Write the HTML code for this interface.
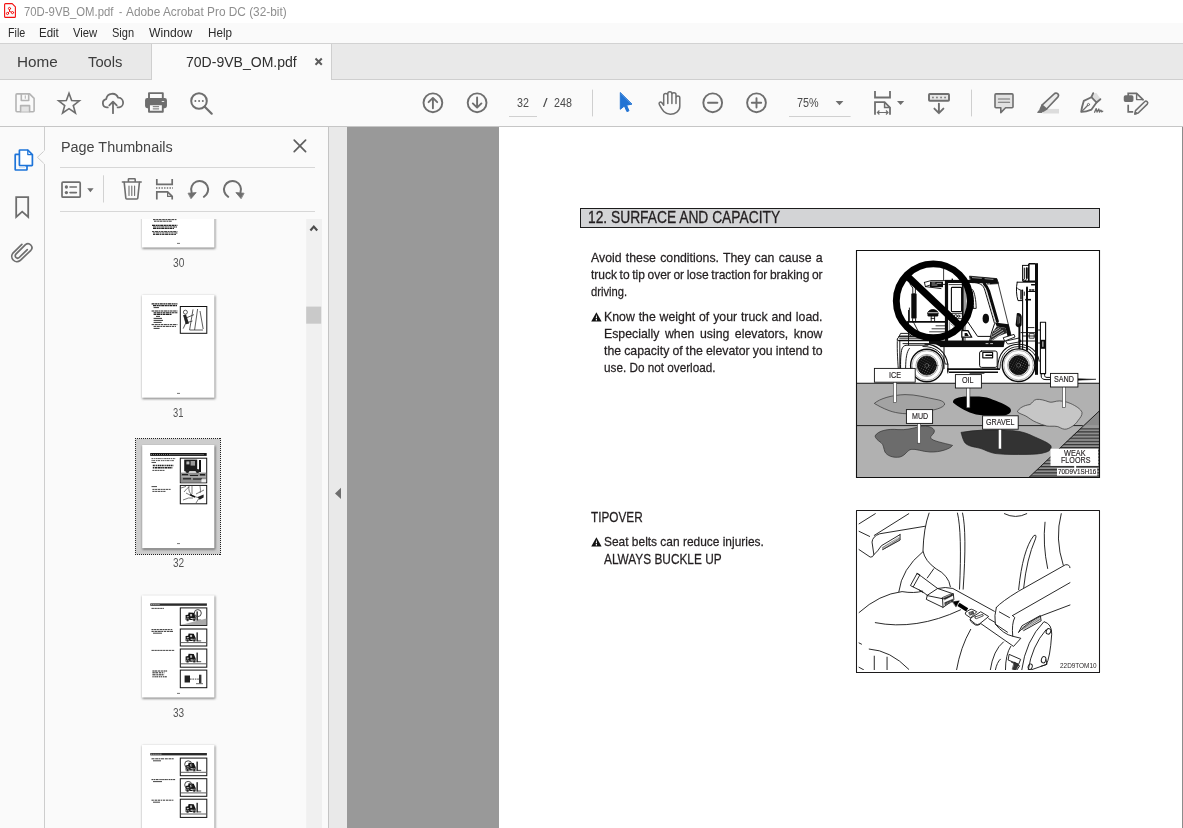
<!DOCTYPE html>
<html lang="en">
<head>
<meta charset="utf-8">
<title>70D-9VB_OM.pdf - Adobe Acrobat Pro DC (32-bit)</title>
<style>
*{box-sizing:border-box;margin:0;padding:0}
html,body{width:1183px;height:828px;overflow:hidden;background:#fff}
body{font-family:"Liberation Sans",sans-serif;color:#333;position:relative}
.abs{position:absolute}
.t{position:absolute;white-space:nowrap;line-height:1;transform-origin:0 0}
/* title bar */
#titlebar{left:0;top:0;width:1183px;height:23px;background:#fff}
#menubar{left:0;top:23px;width:1183px;height:21px;background:#fafafa;border-bottom:1px solid #d2d2d2}
#tabbar{left:0;top:44px;width:1183px;height:36px;background:#e9e9e9;border-bottom:1px solid #cfcfcf}
#tabactive{left:151px;top:44px;width:181px;height:36px;background:#fafafa;border-left:1px solid #cfcfcf;border-right:1px solid #cfcfcf}
#toolbar{left:0;top:80px;width:1183px;height:47px;background:#fafafa;border-bottom:1px solid #c6c6c6}
#leftstrip{left:0;top:127px;width:45px;height:701px;background:#fafafa;border-right:1px solid #cdcdcd}
#panel{left:45px;top:127px;width:284px;height:701px;background:#fafafa;border-right:1px solid #c4c4c4}
#sep{left:329px;top:127px;width:18px;height:701px;background:#e9e9e9}
#docbg{left:347px;top:127px;width:836px;height:701px;background:#999}
#page{left:499px;top:127px;width:684px;height:701px;background:#fff}
.ui{color:#3c3c3c}
</style>
</head>
<body>
<div id="titlebar" class="abs"></div>
<div id="menubar" class="abs"></div>
<div id="tabbar" class="abs"></div>
<div id="tabactive" class="abs"></div>
<div id="toolbar" class="abs"></div>
<div id="leftstrip" class="abs"></div>
<div id="panel" class="abs"></div>
<div id="sep" class="abs"></div>
<div id="docbg" class="abs"></div>
<div id="page" class="abs"></div>
<div class="t" style="left:23.60px;top:5.54px;font-size:12px;color:#8e8e8e;transform:scaleX(0.9447);">70D-9VB_OM.pdf</div>
<div class="t" style="left:119.20px;top:5.54px;font-size:12px;color:#8e8e8e;transform:scaleX(0.8008);">-</div>
<div class="t" style="left:125.90px;top:5.54px;font-size:12px;color:#8e8e8e;transform:scaleX(0.9874);">Adobe Acrobat Pro DC (32-bit)</div>
<div class="t" style="left:7.60px;top:26.64px;font-size:12px;color:#2b2b2b;transform:scaleX(0.8949);">File</div>
<div class="t" style="left:39.30px;top:26.64px;font-size:12px;color:#2b2b2b;transform:scaleX(0.9576);">Edit</div>
<div class="t" style="left:73.30px;top:26.64px;font-size:12px;color:#2b2b2b;transform:scaleX(0.9410);">View</div>
<div class="t" style="left:112.30px;top:26.64px;font-size:12px;color:#2b2b2b;transform:scaleX(0.9204);">Sign</div>
<div class="t" style="left:149.40px;top:26.64px;font-size:12px;color:#2b2b2b;transform:scaleX(1.0139);">Window</div>
<div class="t" style="left:207.50px;top:26.64px;font-size:12px;color:#2b2b2b;transform:scaleX(0.9723);">Help</div>
<div class="t" style="left:16.70px;top:54.13px;font-size:15.2px;color:#3c3c3c;transform:scaleX(1.0061);">Home</div>
<div class="t" style="left:88.20px;top:54.13px;font-size:15.2px;color:#3c3c3c;transform:scaleX(0.9725);">Tools</div>
<div class="t" style="left:185.90px;top:54.13px;font-size:15.2px;color:#2f2f2f;transform:scaleX(0.9241);">70D-9VB_OM.pdf</div>
<div class="t" style="left:517.00px;top:96.72px;font-size:12.5px;color:#4a4a4a;transform:scaleX(0.8561);">32</div>
<div class="t" style="left:543.20px;top:96.72px;font-size:12.5px;color:#4a4a4a;transform:scaleX(1.3237);">/</div>
<div class="t" style="left:554.20px;top:96.72px;font-size:12.5px;color:#4a4a4a;transform:scaleX(0.8585);">248</div>
<div class="t" style="left:797.30px;top:96.72px;font-size:12.5px;color:#4a4a4a;transform:scaleX(0.8636);">75%</div>
<div class="t" style="left:61.20px;top:138.93px;font-size:15.2px;color:#444;transform:scaleX(0.9474);">Page Thumbnails</div>
<div class="t" style="left:172.50px;top:257.37px;font-size:12.2px;color:#555;transform:scaleX(0.8403);">30</div>
<div class="t" style="left:172.80px;top:407.37px;font-size:12.2px;color:#555;transform:scaleX(0.7666);">31</div>
<div class="t" style="left:172.60px;top:556.87px;font-size:12.2px;color:#555;transform:scaleX(0.8256);">32</div>
<div class="t" style="left:172.60px;top:707.17px;font-size:12.2px;color:#555;transform:scaleX(0.8256);">33</div>
<svg class="abs" style="left:0;top:0" width="1183" height="828" viewBox="0 0 1183 828" fill="none" stroke-linecap="round" stroke-linejoin="round">
<g stroke="#f40f0f" stroke-width="1.1" fill="#fafcfc"><path d="M5.6,3.6 H12.2 L15.4,6.8 V16.4 a1,1 0 0 1 -1,1 H5.6 a1,1 0 0 1 -1,-1 V4.6 a1,1 0 0 1 1,-1 Z"/><g fill="#fff" stroke-width="1"><path d="M9.5,8.6 V11.4 L7.6,13.4 M9.5,11.4 L12.4,12.6" /><circle cx="9.5" cy="8.5" r="1.1"/><circle cx="7.5" cy="13.5" r="1.1"/><circle cx="12.5" cy="12.6" r="1.1"/></g></g>
<path d="M315.5,58.5 l6.3,6.3 m0,-6.3 l-6.3,6.3" stroke="#5c5c5c" stroke-width="2" stroke-linecap="butt"/>
<g stroke="#b4b4b4" stroke-width="1.6"><path d="M17,93.9 H29.6 L34.1,98.4 V110.8 a1,1 0 0 1 -1,1 H17 a1,1 0 0 1 -1,-1 V94.9 a1,1 0 0 1 1,-1 Z"/><path d="M21.3,94 V100.5 H28.7 V94"/><path d="M25.3,95.8 V98.2" stroke-width="1.1"/><path d="M20.6,111.6 V105.6 H29.6 V111.6" fill="#e4e4e4"/></g>
<polygon points="69.00,93.30 71.65,100.56 79.37,100.83 73.28,105.59 75.41,113.02 69.00,108.70 62.59,113.02 64.72,105.59 58.63,100.83 66.35,100.56" stroke="#6e6e6e" stroke-width="1.6" stroke-linejoin="miter"/>
<g stroke="#6e6e6e" stroke-width="1.8"><path d="M107.8,107.4 H106.8 a4.2,4.2 0 0 1 -0.6,-8.3 a6.2,6.2 0 0 1 11.9,-1.4 a4.9,4.9 0 0 1 1.1,9.7 H117.6"/><path d="M113,113.2 V102 M109.3,105.3 L113,101.6 L116.7,105.3"/></g>
<g stroke="#6e6e6e" stroke-width="1.9"><rect x="149" y="93.1" width="13.8" height="6"/><rect x="146" y="99" width="20" height="8.3" rx="1.2" fill="#6e6e6e"/><rect x="149" y="104.4" width="13.8" height="7.4" fill="#fafafa"/><path d="M153.2,106.7 H158.7 M153.2,108.9 H158.7" stroke-width="1"/><path d="M162.2,101.5 H163.8" stroke="#e8e8e8" stroke-width="1.1"/></g>
<g stroke="#6e6e6e" stroke-width="2"><circle cx="199" cy="101" r="7.8"/><path d="M204.7,106.7 L211.7,113.7" stroke-width="2.2"/></g><g fill="#6e6e6e"><circle cx="195.4" cy="101" r="1"/><circle cx="199.1" cy="101" r="1"/><circle cx="202.8" cy="101" r="1"/></g>
<g stroke="#6e6e6e" stroke-width="1.9"><circle cx="432.9" cy="102.8" r="9.4"/><path d="M432.9,108.2 V98 M428.6,102.2 L432.9,97.9 L437.2,102.2"/><circle cx="477.1" cy="102.8" r="9.4"/><path d="M477.1,97.4 V107.6 M472.8,103.4 L477.1,107.7 L481.4,103.4"/></g>
<path d="M509,116.5 H537 M789,116.5 H850.6" stroke="#d0d0d0" stroke-width="1" stroke-linecap="butt"/>
<path d="M592.5,89.6 V116.4 M971.5,89.6 V116.4" stroke="#cfcfcf" stroke-width="1" stroke-linecap="butt"/>
<path d="M620.3,92.9 V109.3 L624.4,106 L626.9,111.6 L629,110.8 L626.6,105.2 L631.6,104.2 Z" fill="#2173d4" stroke="#2173d4" stroke-width="1"/>
<path d="M663.7,105.2 V95.6 a2.05,2.05 0 0 1 4.1,0 V103.4 M667.8,95.6 V93.9 a2.05,2.05 0 0 1 4.1,0 V103.4 M671.9,94.8 a2.05,2.05 0 0 1 4.1,0 V103.4 M676,98 a1.9,1.9 0 0 1 3.8,0 V106.2 C679.8,111.2 675.2,114.2 670.3,114.2 C664.6,114.2 662.3,110.2 659.4,104.6 C658.3,102.4 660.3,101.2 662,102.9 L663.7,105.2" stroke="#6e6e6e" stroke-width="1.5"/>
<g stroke="#6e6e6e" stroke-width="1.9"><circle cx="712.7" cy="102.8" r="9.4"/><path d="M708,102.8 H717.4"/><circle cx="756.5" cy="102.8" r="9.4"/><path d="M751.8,102.8 H761.2 M756.5,98.1 V107.5"/></g>
<g fill="#6e6e6e" stroke="none"><path d="M835.6,100.9 H843.4 L839.5,105.2 Z"/><path d="M897,100.9 H904.2 L900.6,105.1 Z"/><path d="M87.2,188.3 H93.6 L90.4,192.2 Z"/></g>
<g stroke="#6e6e6e" stroke-width="1.8" stroke-linecap="butt" stroke-linejoin="miter"><path d="M875,91 V97.5 H890 V91"/><path d="M875,114.8 V102.2 H884.6 L890,107.6 V114.8"/><path d="M884.6,102.2 V107.6 H890" stroke-width="1.5"/><path d="M877.4,112.5 H888 M879.4,110.5 L877.4,112.5 L879.4,114.5 M886,110.5 L888,112.5 L886,114.5" stroke-width="1.2"/></g>
<g stroke="#6e6e6e" stroke-width="1.9"><rect x="929" y="94" width="20" height="6.8" rx="0.8" fill="#e6e6e6"/><path d="M938.9,103.6 V113 M934.4,108.6 L938.9,113.2 L943.4,108.6"/></g><g fill="#6e6e6e"><rect x="932.2" y="96.7" width="1.5" height="1.6"/><rect x="936.2" y="96.7" width="1.5" height="1.6"/><rect x="940.3" y="96.7" width="1.5" height="1.6"/><rect x="944.3" y="96.7" width="1.5" height="1.6"/></g>
<g stroke="#6e6e6e" stroke-width="1.6"><path d="M996,93.9 H1012 a1,1 0 0 1 1,1 V106.7 a1,1 0 0 1 -1,1 H1005.6 L1000.8,112.6 V107.7 H996 a1,1 0 0 1 -1,-1 V94.9 a1,1 0 0 1 1,-1 Z" fill="#e2e2e2"/><path d="M998.4,99 H1009.6 M998.4,102.3 H1009.6" stroke-width="1.1"/></g>
<rect x="1042.6" y="108.9" width="16.4" height="4.6" fill="#dcdcdc"/><g stroke="#6e6e6e" stroke-width="1.6"><path d="M1054.2,93.9 a2.4,2.4 0 0 1 3.6,3.2 L1046.6,109 L1042,105.2 Z" fill="#ececec"/><path d="M1042,105.2 L1040.4,108.8 L1043.4,111 L1046.6,109" fill="#6e6e6e"/><path d="M1040.4,109 L1037.6,112.4 H1042 L1043.2,111 Z" fill="#6e6e6e" stroke-width="1"/></g>
<path d="M1093,93.2 L1096.4,93 L1100.6,98.8 L1096.6,102.4 L1091.6,97.2 Z" fill="#dedede"/><g stroke="#6e6e6e" stroke-width="1.8"><path d="M1093.2,93.1 L1091.4,97.2 L1096.5,102.5 L1100.4,99.2"/><path d="M1091.4,97.2 L1083.8,100.9 C1082.6,104.6 1081.6,108.4 1081.2,111.9 C1085,112 1088.6,110.8 1091.5,109.6 L1096.5,102.5"/><path d="M1081.6,111.6 L1087.8,105.2" stroke-width="1.3"/><circle cx="1088.5" cy="104.5" r="1.1" stroke-width="1"/><path d="M1094.6,112.2 l1.6,-3.6 l0.9,3.4 l1.7,-3 l0.7,3 l1.4,-1.8 l0.9,1.6 l0.9,-0.6" stroke-width="1.35"/></g>
<g stroke="#6e6e6e" stroke-width="1.7"><path d="M1128.2,96 V93.4 H1136.6 L1143,99.6 V100.4 M1128.2,104.8 V111.8 H1133.2" stroke-linecap="butt" stroke-linejoin="miter"/><path d="M1136.6,93.6 V99.6 H1142.8" stroke-width="1.4"/><rect x="1124.6" y="96.2" width="8" height="5" rx="0.9" fill="#6e6e6e"/><path d="M1144.6,101.8 a1.75,1.75 0 0 1 2.7,2.3 L1138.2,113 L1134.8,114 L1135.5,110.6 Z" fill="#f4f4f4" stroke-width="1.5"/><path d="M1134.8,114 L1135.4,111.6 L1137.2,113.2 Z" fill="#6e6e6e" stroke-width="0.8"/></g>
<g stroke="#1d74d9" stroke-width="1.7" stroke-linejoin="round"><path d="M19.6,154.4 H15.8 a0.6,0.6 0 0 0 -0.6,0.6 V169.4 a0.6,0.6 0 0 0 0.6,0.6 H26.4 a0.6,0.6 0 0 0 0.6,-0.6 V166" /><path d="M20,150 H27.8 L32.4,154.6 V165 a0.6,0.6 0 0 1 -0.6,0.6 H20 a0.6,0.6 0 0 1 -0.6,-0.6 V150.6 a0.6,0.6 0 0 1 0.6,-0.6 Z" fill="#fff"/><path d="M27.8,150.2 V154.6 H32.2" stroke-width="1.3"/></g><rect x="19" y="166.3" width="6" height="1.6" fill="#cfe0f5"/>
<path d="M16.2,197.2 H28.2 V217 L22.2,211.6 L16.2,217 Z" stroke="#6e6e6e" stroke-width="1.8" stroke-linejoin="miter"/>
<path d="M27.2,249.4 L19.4,257.6 a2.3,2.3 0 0 1 -3.4,-3.2 L25.2,244.6 a3.9,3.9 0 0 1 5.6,5.4 L20.4,260.6 a5.2,5.2 0 0 1 -7.4,-7.2 L21.6,244.4" stroke="#6e6e6e" stroke-width="1.7" transform="rotate(2 22 252)"/>
<path d="M44.5,150.6 L37.4,157.3 L44.5,164" fill="#fafafa" stroke="#cdcdcd" stroke-width="1"/><path d="M44.5,151.4 V163.2" stroke="#fafafa" stroke-width="1.6"/>
<path d="M294.2,140.2 L305.6,151.6 M305.6,140.2 L294.2,151.6" stroke="#5e5e5e" stroke-width="1.7"/>
<path d="M60,167.5 H315 M60,211.5 H315" stroke="#d7d7d7" stroke-width="1" stroke-linecap="butt"/><path d="M103.5,175.3 V202.5" stroke="#d2d2d2" stroke-width="1" stroke-linecap="butt"/>
<g stroke="#6e6e6e" stroke-width="1.7"><rect x="62" y="182.2" width="18.2" height="15" rx="1"/><path d="M70,187 H76.4 M70,192.6 H76.4" stroke-width="1.6"/></g><g fill="#6e6e6e"><circle cx="66.4" cy="187" r="1.65"/><circle cx="66.4" cy="192.6" r="1.65"/></g>
<g stroke="#6e6e6e" stroke-width="1.6"><path d="M122.4,182 H141.2 M128.4,181.8 V179.4 a0.6,0.6 0 0 1 0.6,-0.6 H134.6 a0.6,0.6 0 0 1 0.6,0.6 V181.8"/><path d="M124.2,182.4 L125.8,198 a1,1 0 0 0 1,1 H136.8 a1,1 0 0 0 1,-1 L139.4,182.4"/><path d="M129,186 V195.4 M131.8,186 V195.4 M134.6,186 V195.4" stroke-width="1.1"/></g>
<g stroke="#6e6e6e" stroke-width="1.7" stroke-linecap="butt" stroke-linejoin="miter"><path d="M156.8,179 V184.4 H172.2 V179"/><path d="M156.8,199.6 V191.8 H167.6 L172.2,196.4 V199.6"/><path d="M167.6,192 V196.4 H172" stroke-width="1.2"/><path d="M156,188 H173" stroke-width="1.4" stroke-dasharray="1.4 1.3"/></g>
<g stroke="#6e6e6e" stroke-width="2"><path d="M191.6,192.3 A8.5,8.5 0 1 1 203.85,196.8"/><path d="M240.5,192.3 A8.5,8.5 0 1 0 228.25,196.8"/></g><g fill="#6e6e6e" stroke="#6e6e6e" stroke-width="0.8"><path d="M188.4,193.2 L196.2,192.6 L191.2,198.4 Z"/><path d="M243.7,193.2 L235.9,192.6 L240.9,198.4 Z"/></g>
<rect x="306.2" y="219" width="15.8" height="609" fill="#f0f0f0"/><rect x="306.2" y="306.6" width="15" height="17.1" fill="#c9c9c9"/><path d="M310.4,230.4 L313.8,226.6 L317.2,230.4" stroke="#4c4c4c" stroke-width="2.2" stroke-linecap="butt" stroke-linejoin="miter"/>
<path d="M341,487.8 V499 L335,493.4 Z" fill="#6e6e6e"/>
</svg>
<svg class="abs" style="left:45px;top:219px" width="261" height="609" viewBox="45 219 261 609">
<defs><filter id="sh" x="-10%" y="-10%" width="120%" height="120%"><feGaussianBlur stdDeviation="0.9"/></filter></defs>
<rect x="142.3" y="210.8" width="73.0" height="38.1" fill="#8a8a8a" filter="url(#sh)"/><rect x="142" y="210" width="72.4" height="37.5" fill="#fff"/>
<g stroke="#222" stroke-width="0.9"><path d="M153,219.6 H177 M154,221.2 H172" stroke-dasharray="2.6 0.6 1.8 0.5 3 0.7"/><path d="M152,225.4 H177.4 M153,227 H177 M153,228.5 H174" stroke-width="1.1" stroke-dasharray="3 0.5 2.2 0.4 1.6 0.5"/><path d="M152,231.6 H177.4 M153,233 H177.4 M153,234.5 H176" stroke-dasharray="2.4 0.6 3.2 0.5 1.8 0.6"/></g>
<path d="M177,243.4 H180" stroke="#555" stroke-width="0.8"/>
<rect x="142.3" y="295.8" width="73.0" height="103.29999999999998" fill="#8a8a8a" filter="url(#sh)"/><rect x="142" y="295" width="72.4" height="102.69999999999999" fill="#fff"/>
<g stroke="#222" stroke-width="0.9"><path d="M151.6,303.9 H177.4 M153,305.6 H177" stroke-width="1.1" stroke-dasharray="3 0.5 2.2 0.4 1.6 0.5"/><path d="M153.6,307.6 H159"/><path d="M151.6,311 H177.4 M153.6,312.8 H177.4 M153.6,314.4 H172" stroke-width="1.1" stroke-dasharray="2.6 0.5 3.4 0.4 1.8 0.5"/><path d="M156,316.4 H160 M153.6,318.4 H162 M153.6,320.4 H163 M153.6,322.4 H161.6"/><path d="M151.6,324.6 H177.4 M153.6,326.4 H176" stroke-dasharray="2.4 0.6 3.2 0.5 1.8 0.6"/><path d="M153.6,328.4 H159.6"/></g>
<rect x="180.3" y="306.5" width="26.5" height="26.8" fill="#fff" stroke="#111" stroke-width="1"/>
<g stroke="#333" stroke-width="0.8" fill="none"><circle cx="185.4" cy="312.2" r="2"/><path d="M183.6,315 L185.8,323 L192.4,321 M185.8,323 L183.2,328.6 M186,318 L194,314.6 M193,309.4 L189.6,330 M197.6,309 L194.6,330 M189.6,330 H203 M200,311 L203.2,329"/></g><path d="M183.4,315.2 L186,324.2 L189,323.4 L186,314.4 Z" fill="#222"/>
<path d="M177,393.4 H180" stroke="#555" stroke-width="0.8"/>
<rect x="135.5" y="438.5" width="85" height="116" fill="#cdcdcd"/><path d="M135,438.5 H221 M135,554.5 H221 M135.5,438 V555 M220.5,438 V555" fill="none" stroke="#222" stroke-width="1" stroke-dasharray="1 1"/>

<rect x="142.4" y="446" width="73" height="103.6" fill="#666" filter="url(#sh)"/><rect x="142.2" y="445" width="72.2" height="103.2" fill="#fff"/>
<rect x="150.2" y="453" width="56.5" height="2.9" fill="#151515"/><path d="M151,454.5 H170" stroke="#ccc" stroke-width="0.7" stroke-dasharray="0.8 1.2"/><path d="M170,454.5 H204" stroke="#999" stroke-width="0.5"/>
<path d="M151.5,458.6 H175.3" stroke="#444" stroke-width="0.9" stroke-dasharray="1.5 0.6 1.3 0.6 1.9 0.3 2.2 0.3"/><path d="M151.5,460.6 H174.6" stroke="#444" stroke-width="0.9" stroke-dasharray="1.3 0.3 2.0 0.7 1.4 0.4 2.5 0.8"/>
<path d="M151.5,462.5 H156" stroke="#444" stroke-width="0.9"/>
<path d="M152.8,465.5 H173.7" stroke="#222" stroke-width="1.4" stroke-dasharray="2.0 0.8 1.3 0.7 1.8 0.4 1.4 0.5"/><path d="M152.8,467.8 H172.3" stroke="#222" stroke-width="1.4" stroke-dasharray="1.6 0.6 2.5 0.5 2.3 0.3 1.3 0.4"/>
<path d="M152.4,470.4 H165" stroke="#333" stroke-width="0.9" stroke-dasharray="2 0.5"/>
<path d="M151.5,486.6 H157" stroke="#333" stroke-width="0.9"/><path d="M152.4,489.4 H170.6 M152.4,491.4 H166" stroke="#333" stroke-width="0.9" stroke-dasharray="2.2 0.5"/>
<rect x="180.3" y="458.2" width="26.4" height="24.6" fill="#fff" stroke="#111" stroke-width="1"/>
<rect x="180.8" y="472.6" width="25.4" height="9.8" fill="#8f8f8f"/>
<rect x="184.2" y="459.6" width="13" height="11.6" fill="#1c1c1c"/><rect x="186.4" y="461.4" width="3" height="3" fill="#bbb"/><rect x="190.6" y="461" width="4.4" height="4.6" fill="#999"/><rect x="199" y="460" width="2" height="12" fill="#111"/><circle cx="187.4" cy="471" r="2" fill="#222"/><circle cx="197.6" cy="471" r="2" fill="#222"/>
<path d="M182,474.6 h6 M190,475.6 h8 M200,474.8 h5" stroke="#222" stroke-width="1.4"/><path d="M183,478.6 h8 M193,479 h9" stroke="#333" stroke-width="1.6"/><path d="M181.4,476.8 h24.6" stroke="#ccc" stroke-width="0.8"/><rect x="201.4" y="479.2" width="4.6" height="3" fill="#eee"/>
<rect x="180.3" y="485.4" width="26.4" height="18.4" fill="#fff" stroke="#111" stroke-width="1"/>
<g stroke="#444" stroke-width="0.7" fill="none"><path d="M181,488 l5,-1.6 M184,492 q3,-4 5,-5 M189,486 q-1,6 3,9 M192,486 v8 M186,493 l6,3 l8,2 M196,494 l8,-4 M200,486 q1,5 0,7 M183,500 q6,-3 10,-2 M196,503 q2,-5 6,-6"/></g><path d="M190,494.6 l5,2.4" stroke="#111" stroke-width="1.6"/><path d="M197.6,497 l6,-2.6 v3 l-4,2.4 Z" fill="#222"/>
<path d="M177,543.6 H180" stroke="#555" stroke-width="0.8"/>
<rect x="142.3" y="596.0999999999999" width="73.0" height="102.80000000000004" fill="#8a8a8a" filter="url(#sh)"/><rect x="142" y="595.3" width="72.4" height="102.20000000000005" fill="#fff"/>
<rect x="150.3" y="603.4" width="56.6" height="2.4" fill="#2b2b2b"/><path d="M151,604.6 H160" stroke="#ddd" stroke-width="0.7" stroke-dasharray="1.5 0.6"/>
<rect x="180.3" y="607.9" width="26.5" height="17.5" fill="#fff" stroke="#111" stroke-width="1"/><path d="M185.6,615.1 L188.1,614.8 L188.6,612.4 L193.7,612.8 L195.7,617.1 V620.1 H185.6 Z" fill="#151515"/><rect x="190.1" y="614.0" width="2.0" height="2.3" fill="#bbb"/><rect x="186.8" y="616.3" width="2.0" height="0.9" fill="#ddd"/><rect x="190.6" y="618.0" width="2.2" height="0.9" fill="#eee"/><rect x="196.5" y="611.4" width="1.3" height="9.1" fill="#111"/><path d="M196.7,620.1 h4.5" stroke="#222" stroke-width="0.8"/><circle cx="187.6" cy="619.8" r="1.5" fill="#222" stroke="#ddd" stroke-width="0.5"/><circle cx="194.2" cy="619.8" r="1.5" fill="#222" stroke="#ddd" stroke-width="0.5"/><circle cx="197.8" cy="613.1" r="3.5" fill="none" stroke="#444" stroke-width="1"/>
<path d="M180.8,624.9 L206.3,624.9 L206.3,618.4 Z" fill="#a9a9a9"/>
<rect x="180.3" y="629" width="26.5" height="17" fill="#fff" stroke="#111" stroke-width="1"/><path d="M185.6,636.0 L188.1,635.7 L188.6,633.4 L193.7,633.8 L195.7,637.9 V640.9 H185.6 Z" fill="#151515"/><rect x="190.1" y="634.9" width="2.0" height="2.2" fill="#bbb"/><rect x="186.8" y="637.2" width="2.0" height="0.9" fill="#ddd"/><rect x="190.6" y="638.8" width="2.2" height="0.9" fill="#eee"/><rect x="196.5" y="632.4" width="1.3" height="8.8" fill="#111"/><path d="M196.7,640.9 h4.5" stroke="#222" stroke-width="0.8"/><circle cx="187.6" cy="640.5" r="1.4" fill="#222" stroke="#ddd" stroke-width="0.5"/><circle cx="194.2" cy="640.5" r="1.4" fill="#222" stroke="#ddd" stroke-width="0.5"/>
<path d="M181,642.6 H206" stroke="#333" stroke-width="0.8"/>
<rect x="180.3" y="649" width="26.5" height="18.200000000000045" fill="#fff" stroke="#111" stroke-width="1"/><path d="M185.6,656.5 L188.1,656.1 L188.6,653.7 L193.7,654.1 L195.7,658.5 V661.7 H185.6 Z" fill="#151515"/><rect x="190.1" y="655.3" width="2.0" height="2.4" fill="#bbb"/><rect x="186.8" y="657.7" width="2.0" height="1.0" fill="#ddd"/><rect x="190.6" y="659.5" width="2.2" height="1.0" fill="#eee"/><rect x="196.5" y="652.6" width="1.3" height="9.5" fill="#111"/><path d="M196.7,661.7 h4.5" stroke="#222" stroke-width="0.8"/><circle cx="187.6" cy="661.3" r="1.5" fill="#222" stroke="#ddd" stroke-width="0.5"/><circle cx="194.2" cy="661.3" r="1.5" fill="#222" stroke="#ddd" stroke-width="0.5"/>
<path d="M181,663.8000000000001 H206" stroke="#333" stroke-width="0.8"/>
<rect x="180.3" y="670.1" width="26.5" height="17.600000000000023" fill="#fff" stroke="#111" stroke-width="1"/><rect x="184.6" y="675.5" width="5.4" height="7" fill="#222"/><path d="M190,679.1 h9" stroke="#333" stroke-width="0.9" stroke-dasharray="1.6 0.8"/><rect x="199" y="674.7" width="2.4" height="8.6" fill="#333"/><path d="M196,683.7 h7" stroke="#444" stroke-width="0.8"/>
<path d="M151.5,608.4 H164" stroke="#333" stroke-width="0.9" stroke-dasharray="2.4 0.5"/>
<path d="M151.5,629.6 H172.3" stroke="#222" stroke-width="0.9" stroke-dasharray="2.1 0.5 2.4 0.5 1.8 0.7 2.6 0.4"/><path d="M151.5,631.4 H173.0" stroke="#222" stroke-width="0.9" stroke-dasharray="2.3 0.7 2.7 0.4 3.2 0.4 2.0 0.7"/>
<path d="M153,633.2 H162" stroke="#333" stroke-width="0.9"/>
<path d="M151.5,650.4 H174.6" stroke="#333" stroke-width="0.9" stroke-dasharray="2.4 0.5"/>
<path d="M152.4,671 H167.1" stroke="#222" stroke-width="1.0" stroke-dasharray="2.2 0.3 2.5 0.7 2.3 0.7 1.8 0.6"/><path d="M152.4,672.8 H164.4" stroke="#222" stroke-width="1.0" stroke-dasharray="2.4 0.5 2.9 0.8 2.1 0.6 1.3 0.7"/><path d="M152.4,674.8 H164.1" stroke="#222" stroke-width="1.0" stroke-dasharray="3.2 0.7 1.8 0.5 2.5 0.3 2.1 0.4"/><path d="M152.4,676.8 H167.3" stroke="#222" stroke-width="1.0" stroke-dasharray="1.3 0.7 1.5 0.4 2.0 0.7 1.4 0.5"/>
<path d="M177,693.4 H180" stroke="#555" stroke-width="0.8"/>
<rect x="142.3" y="745.8" width="73.0" height="85.6" fill="#8a8a8a" filter="url(#sh)"/><rect x="142" y="745" width="72.4" height="85" fill="#fff"/>
<rect x="150.3" y="753" width="56.6" height="2.4" fill="#2b2b2b"/><path d="M151,754.2 H162" stroke="#ddd" stroke-width="0.7" stroke-dasharray="1.5 0.6"/>
<rect x="180.3" y="758.1" width="26.5" height="17.600000000000023" fill="#fff" stroke="#111" stroke-width="1"/><path d="M185.6,765.4 L188.1,765.0 L188.6,762.7 L193.7,763.1 L195.7,767.3 V770.4 H185.6 Z" fill="#151515"/><rect x="190.1" y="764.2" width="2.0" height="2.3" fill="#bbb"/><rect x="186.8" y="766.5" width="2.0" height="0.9" fill="#ddd"/><rect x="190.6" y="768.3" width="2.2" height="0.9" fill="#eee"/><rect x="196.5" y="761.6" width="1.3" height="9.2" fill="#111"/><path d="M196.7,770.4 h4.5" stroke="#222" stroke-width="0.8"/><circle cx="187.6" cy="770.0" r="1.5" fill="#222" stroke="#ddd" stroke-width="0.5"/><circle cx="194.2" cy="770.0" r="1.5" fill="#222" stroke="#ddd" stroke-width="0.5"/><circle cx="188.2" cy="764.3" r="3.5" fill="none" stroke="#444" stroke-width="1"/>
<path d="M181,772.3000000000001 H206" stroke="#333" stroke-width="0.8"/>
<rect x="180.3" y="778.7" width="26.5" height="17.59999999999991" fill="#fff" stroke="#111" stroke-width="1"/><path d="M185.6,786.0 L188.1,785.6 L188.6,783.3 L193.7,783.7 L195.7,787.9 V791.0 H185.6 Z" fill="#151515"/><rect x="190.1" y="784.8" width="2.0" height="2.3" fill="#bbb"/><rect x="186.8" y="787.1" width="2.0" height="0.9" fill="#ddd"/><rect x="190.6" y="788.9" width="2.2" height="0.9" fill="#eee"/><rect x="196.5" y="782.2" width="1.3" height="9.2" fill="#111"/><path d="M196.7,791.0 h4.5" stroke="#222" stroke-width="0.8"/><circle cx="187.6" cy="790.6" r="1.5" fill="#222" stroke="#ddd" stroke-width="0.5"/><circle cx="194.2" cy="790.6" r="1.5" fill="#222" stroke="#ddd" stroke-width="0.5"/><circle cx="188.2" cy="784.9" r="3.5" fill="none" stroke="#444" stroke-width="1"/>
<path d="M181,792.9 H206" stroke="#333" stroke-width="0.8"/>
<rect x="180.3" y="799.2" width="26.5" height="18.199999999999932" fill="#fff" stroke="#111" stroke-width="1"/><path d="M185.6,806.7 L188.1,806.3 L188.6,803.9 L193.7,804.3 L195.7,808.7 V811.9 H185.6 Z" fill="#151515"/><rect x="190.1" y="805.5" width="2.0" height="2.4" fill="#bbb"/><rect x="186.8" y="807.9" width="2.0" height="1.0" fill="#ddd"/><rect x="190.6" y="809.7" width="2.2" height="1.0" fill="#eee"/><rect x="196.5" y="802.8" width="1.3" height="9.5" fill="#111"/><path d="M196.7,811.9 h4.5" stroke="#222" stroke-width="0.8"/><circle cx="187.6" cy="811.5" r="1.5" fill="#222" stroke="#ddd" stroke-width="0.5"/><circle cx="194.2" cy="811.5" r="1.5" fill="#222" stroke="#ddd" stroke-width="0.5"/>
<path d="M181,814.0 H206" stroke="#333" stroke-width="0.8"/>
<path d="M151.5,758.8 H173.7" stroke="#222" stroke-width="0.9" stroke-dasharray="3.0 0.7 2.9 0.4 2.0 0.5 3.0 0.8"/>
<path d="M153,760.8 H161" stroke="#333" stroke-width="0.9"/>
<path d="M151.5,779.6 H175.1" stroke="#222" stroke-width="0.9" stroke-dasharray="1.6 0.4 1.7 0.5 2.4 0.4 1.2 0.5"/>
<path d="M153,781.6 H162" stroke="#333" stroke-width="0.9"/>
<path d="M151.5,800.2 H173.8" stroke="#222" stroke-width="0.9" stroke-dasharray="2.3 0.8 2.6 0.6 2.4 0.6 1.3 0.7"/>
<path d="M153,802.2 H160" stroke="#333" stroke-width="0.9"/>
</svg>
<div class="abs" style="left:1182px;top:127px;width:1px;height:701px;background:#8c8c8c"></div>
<div class="abs" style="left:580px;top:208px;width:520px;height:20px;background:#d3d4d6;border:1px solid #1c1c1c"></div>
<div class="t" style="left:587.50px;top:209.43px;font-size:16.5px;color:#231f20;transform:scaleX(0.8358);-webkit-text-stroke:0.32px #231f20;">12. SURFACE AND CAPACITY</div>
<div class="t" style="left:591.00px;top:250.59px;font-size:13.6px;color:#231f20;transform:scaleX(0.9050);word-spacing:0.918px;-webkit-text-stroke:0.26px #231f20;">Avoid these conditions. They can cause a</div>
<div class="t" style="left:591.00px;top:268.09px;font-size:13.6px;color:#231f20;transform:scaleX(0.8850);word-spacing:-0.894px;-webkit-text-stroke:0.26px #231f20;">truck to tip over or lose traction for braking or</div>
<div class="t" style="left:591.00px;top:285.29px;font-size:13.6px;color:#231f20;transform:scaleX(0.8233);-webkit-text-stroke:0.26px #231f20;">driving.</div>
<div class="t" style="left:604.10px;top:309.89px;font-size:13.6px;color:#231f20;transform:scaleX(0.9050);word-spacing:0.487px;-webkit-text-stroke:0.26px #231f20;">Know the weight of your truck and load.</div>
<div class="t" style="left:604.10px;top:326.89px;font-size:13.6px;color:#231f20;transform:scaleX(0.9050);word-spacing:2.359px;-webkit-text-stroke:0.26px #231f20;">Especially when using elevators, know</div>
<div class="t" style="left:604.10px;top:343.69px;font-size:13.6px;color:#231f20;transform:scaleX(0.9050);word-spacing:-0.379px;-webkit-text-stroke:0.26px #231f20;">the capacity of the elevator you intend to</div>
<div class="t" style="left:604.10px;top:360.69px;font-size:13.6px;color:#231f20;transform:scaleX(0.8632);-webkit-text-stroke:0.26px #231f20;">use. Do not overload.</div>
<div class="t" style="left:591.00px;top:510.45px;font-size:14.0px;color:#231f20;transform:scaleX(0.8412);-webkit-text-stroke:0.26px #231f20;">TIPOVER</div>
<div class="t" style="left:604.10px;top:534.79px;font-size:13.6px;color:#231f20;transform:scaleX(0.8776);-webkit-text-stroke:0.26px #231f20;">Seat belts can reduce injuries.</div>
<div class="t" style="left:604.20px;top:552.35px;font-size:14.0px;color:#231f20;transform:scaleX(0.8460);-webkit-text-stroke:0.26px #231f20;">ALWAYS BUCKLE UP</div>
<svg class="abs" style="left:591.2px;top:311.6px" width="11" height="10" viewBox="0 0 11 10"><path d="M5.4,0.2 L10.6,9.6 H0.2 Z" fill="#111"/><path d="M5.4,2.6 L6.1,6.3 H4.7 Z M4.8,7 H6 V8.4 H4.8 Z" fill="#fff"/></svg>
<svg class="abs" style="left:591.2px;top:537px" width="11" height="10" viewBox="0 0 11 10"><path d="M5.4,0.2 L10.6,9.6 H0.2 Z" fill="#111"/><path d="M5.4,2.6 L6.1,6.3 H4.7 Z M4.8,7 H6 V8.4 H4.8 Z" fill="#fff"/></svg>
<svg class="abs" style="left:850px;top:244px" width="256" height="240" viewBox="850 244 256 240" fill="none" font-family="Liberation Sans, sans-serif">
<defs><clipPath id="f1c"><rect x="857" y="251" width="242.5" height="226.3"/></clipPath><pattern id="hat" x="0" y="428.2" width="6" height="3.15" patternUnits="userSpaceOnUse"><rect width="6" height="3.15" fill="#8e8e8e"/><rect width="6" height="1.15" fill="#2e2e2e"/></pattern><pattern id="hub" width="2.2" height="2.2" patternUnits="userSpaceOnUse" patternTransform="rotate(30)"><rect width="2.2" height="2.2" fill="#111"/><circle cx="1.1" cy="1.1" r="0.36" fill="#8a8a8a"/></pattern></defs>
<rect x="856.5" y="250.5" width="243" height="227" fill="#fff"/>
<g clip-path="url(#f1c)">
<rect x="857" y="383.3" width="243" height="95" fill="#b1b1b1"/>
<path d="M1099.5,410.8 L1082.9,425.8 L1099.5,425.8 Z" fill="#8b8b8b"/><path d="M1082.9,425.6 L1099.5,425.6 L1099.5,428.4 L1080,428.4 Z" fill="#999"/>
<path d="M1080.2,428.2 L1099.5,428.2 L1099.5,477.5 L1028.8,477.5 Z" fill="url(#hat)"/>
<path d="M1099.5,410.8 L1028.8,477.5" stroke="#222" stroke-width="1"/>
<path d="M857,383.3 H1100" stroke="#111" stroke-width="1.1"/><path d="M857,425.6 H1082.8" stroke="#222" stroke-width="1"/>
<path d="M874.3,403.4 C880,398.5 892,395 905,394.6 C916,394.4 926,397.6 936,399.4 C942,400.4 945.4,402.4 944.4,405 C941,409.6 928,410.8 918,413 C908,414.6 897,413.6 889,410.6 C883,408.4 878,405.6 874.3,403.4 Z" fill="#a3a3a3" stroke="#333" stroke-width="0.7"/>
<path d="M953,402.6 C952.4,399 958,396.6 968,396.6 C978,396.2 985,396.6 990,398.4 C998,401.4 1006,404.4 1010,408 C1012.4,411 1010.4,414.4 1004,415.4 C994,416.2 984,416 976,414.6 C968,412.6 958,407 953,402.6 Z" fill="#000"/>
<path d="M1017.4,411.8 C1019,408 1023.7,405.5 1030,404.5 C1032.6,403 1033,400 1036.6,399.4 C1040,399 1044.7,400.3 1048,401.6 C1051,402.8 1053,402 1056.4,401.2 C1060.4,400.4 1066,401.4 1070.8,403.6 C1075.6,405.8 1080.8,409 1082,412.3 C1082.4,415.4 1080,418 1078.3,420.2 C1076.6,423 1074.4,425 1072,426.5 C1069.6,428 1067,429.4 1064.6,429.2 C1061.6,429 1059.6,427 1057.3,426.5 C1054,425.8 1050,426.6 1046.8,426 C1043,425.2 1039.6,423.6 1036.3,422.3 C1032,420.6 1029,417.8 1025.8,416 C1022.6,414.4 1019,413.6 1017.4,411.8 Z" fill="#c6c6c6" stroke="#333" stroke-width="0.7"/>
<path d="M875,436 C878,430.6 888,428.6 898,429.6 C906,430.2 912,428.4 920,426.6 C928,425.2 934,427.6 934.4,431 C934.6,434 930,435.6 930.6,438 C932,441 944,443 952.6,445.4 C950,449 940,452.4 930,452 C922,451.6 916,448.6 911,449.4 C907,450.4 906,455 900,457 C893,458.2 887,455.6 885,452 C883.4,448.4 884,445 881,442.6 C878,440.6 875.6,438.6 875,436 Z" fill="#6c6c6c" stroke="#333" stroke-width="0.7"/>
<path d="M961,432.4 C975,430 990,429.6 1004,430 C1014,430.4 1023,431.4 1030,434.8 C1038,438.6 1046,441.4 1050.4,445 C1052.4,447.6 1050.4,450.6 1046.6,452 C1041,454 1034,454.4 1026,454.4 C1016,454.4 1006,454.8 996,453.6 C988,452.4 984,449 978,447.8 C972,446.6 966.6,445.6 964.4,442 C962.6,438.6 962,435.4 961,432.4 Z" fill="#333" stroke="#222" stroke-width="0.7"/>
</g>
<g stroke="#0c0c0c" stroke-width="1" stroke-linejoin="round" stroke-linecap="round">
<path d="M899,336.6 H916 M897.4,339 C897,346 897.4,358 898.4,370 M899.8,341 V369 M897.4,339 L899,336.6 M899,336.6 L900.6,333.4 H908 M903,343.6 H945" stroke-width="0.9"/>
<path d="M898.8,340.6 H934" stroke-width="1.5"/><path d="M900.4,336 H914 M899.6,338.2 H920" stroke-width="0.9"/><path d="M900.6,368 C900.4,358 901,350 902.6,347.6 C903.8,345.6 905,345.2 908,345.2 H928" stroke-width="1"/><path d="M905.6,368 C905.8,358 906.6,352 909.4,348.4" stroke-width="0.9"/><path d="M908.5,310.4 V345" stroke-width="0.9"/>
<path d="M907.8,321.9 H945" stroke-width="1.8"/><path d="M907.8,321.9 L905,327 M905,327 L911,336.6 M913.6,322.4 L921,336.6 M909.4,321.6 V308" stroke-width="0.9"/>
<path d="M936,325.8 H946 M932,328.8 H946 M929.6,331.8 H946 M927,334.8 H946 M925,337.6 H946" stroke-width="0.8"/>
<rect x="911.3" y="293.2" width="5.3" height="25.4" rx="1.2" fill="#0c0c0c" stroke="none"/><path d="M912.8,293 V288 L909.8,283.6 L911.6,282.6 L915.4,287.6 V293" fill="#fff" stroke-width="0.9"/><path d="M912.6,318.6 V322 M915.6,318.6 V322" stroke-width="0.9"/>
<path d="M927.6,313.4 C928,310.8 930.6,309.6 932.8,309.6 C935.4,309.6 937.8,310.8 938.2,313.4 Z" fill="#0c0c0c" stroke-width="0.9"/><path d="M928.6,312.6 H937.4" stroke="#fff" stroke-width="0.7"/><rect x="927.4" y="313.8" width="11" height="2.6" rx="1.1" fill="#0c0c0c" stroke="none"/><path d="M931.2,316.2 V321.6 M934.6,316.2 V321.6 M931.2,318.4 H934.6" stroke-width="0.9"/>
<path d="M943.6,269 V280" stroke-width="0.8"/>
<path d="M924.4,282.4 L931,280.6 H945 M924.4,282.4 L925.4,286.6 L941,288.6 M925.4,286.6 L932,284.4 H945" stroke-width="0.9"/><rect x="930" y="281.6" width="13" height="5.6" fill="#0c0c0c" stroke="none"/><path d="M932,283 h3 M932,285 h5 M937,283.4 h4" stroke="#ddd" stroke-width="0.7"/>
<rect x="945" y="279.9" width="38" height="3.1" fill="#0c0c0c" stroke="none"/><rect x="951.6" y="278.6" width="1.4" height="1.6" fill="#0c0c0c" stroke="none"/>
<rect x="944.9" y="280" width="3.2" height="62" fill="#0c0c0c" stroke="none"/>
<path d="M962.8,283 V341" stroke-width="1.9"/><path d="M965,283 V341" stroke-width="0.8"/><rect x="951.4" y="287.4" width="10.2" height="24.2" rx="0.8" stroke-width="1.1" fill="#fff"/><path d="M949,284.6 H962" stroke-width="0.8"/>
<path d="M949,313.6 H962 M949,318.6 H962" stroke-width="0.8"/><circle cx="955.8" cy="316.2" r="1.5" stroke-width="0.8"/><circle cx="958.8" cy="316.2" r="1.1" stroke-width="0.8"/>
<path d="M949.6,322 V332 M951,324 L956,328 L960,323" stroke="#666" stroke-width="0.7"/>
<path d="M972.6,289.6 C974.6,292 976,300 976.2,308.4 H972 M970.6,289.6 C972.6,293 973.8,300 973.6,308" stroke-width="0.9"/>
<path d="M969.8,276.2 L996.8,278.6 L998.6,283.6 L988,284.2 L970.6,280.4 Z" fill="#0c0c0c" stroke-width="0.8"/><path d="M972.4,277.6 l9,0.7 M985,278.7 l8,0.7" stroke="#ccc" stroke-width="0.7"/><path d="M986.8,283.4 v3.2 M989,283.6 v3" stroke="#fff" stroke-width="0.8"/>
<path d="M972,282.6 C980,282.4 983.4,285 984.8,290 L994.6,323.6 L991.4,333 L989.6,341" stroke-width="1"/><path d="M984.4,284 C986.4,286 987.6,288 988.6,291 L997.4,321.4" stroke-width="3"/><path d="M985.6,290 L995.4,323" stroke="#999" stroke-width="0.6" stroke-dasharray="2 1.4"/>
<path d="M998.4,284.4 L1011.2,336" stroke-width="0.8"/>
<ellipse cx="985.8" cy="318.6" rx="3.2" ry="4.8" fill="#0c0c0c" stroke="none"/>
<path d="M967.8,322 L977.6,336.4 H990" stroke-width="1"/>
<path d="M961.8,330.6 L968,330.6 L971.8,337.2 H961.8 Z" fill="#fff" stroke-width="1.2"/><path d="M964.6,333 l2.4,0 l1.8,3 h-4.2 z" fill="#0c0c0c" stroke="none"/>
<path d="M995,322.6 L1008.6,324.2 L1011.6,338 L1008,338.6 L1005.6,328 L996.8,326.4 Z" fill="#0c0c0c" stroke="none"/>
<path d="M996.8,326.4 L1005.6,328 L1007,333 L999,336 L991.6,341 L990,341 L992.6,332 Z" fill="#2a2a2a" stroke="none"/><path d="M991.6,340 L1003.6,332.4 M992,337 L1002.6,330.4 M993,334 L1000.6,329 M994.4,331 L999,328" stroke="#e0e0e0" stroke-width="0.7"/>
<path d="M1003.6,337.6 L1014,334.4 L1015,337 L1005,341 Z" fill="#fff" stroke-width="0.9"/><path d="M1006,341 L1019,338 L1021,341.6 L1008,344 Z" fill="#fff" stroke-width="0.9"/>
<path d="M929,340.6 H1005 L1003.6,347 H941 L936,344.6 L929,343.6 Z" fill="#0c0c0c" stroke="none"/><path d="M986,343.6 h2 M990.6,343.6 h2" stroke="#ddd" stroke-width="0.9"/>
<path d="M944,346.6 V368.6 M940.6,346.6 H1003" stroke-width="1"/><path d="M947.6,369.1 H1000 M949,372.3 H998" stroke-width="1.6" stroke-linecap="butt"/><path d="M947.8,368.6 V373 M970,373.2 H984" stroke-width="1"/>
<rect x="979.6" y="351" width="17.6" height="16.4" rx="2" fill="#fff" stroke-width="1"/><rect x="982.8" y="352.4" width="9.8" height="5.4" fill="#fff" stroke-width="1.2"/><path d="M986,355.2 h6" stroke-width="1.6"/>
<rect x="1035" y="263.2" width="3" height="111.6" fill="#0c0c0c" stroke="none"/>
<path d="M1028.8,263.8 H1035 M1028.8,263.8 V281.3 M1022.8,281.3 H1035" stroke-width="1.6" stroke-linecap="butt"/><path d="M1022.6,265.4 H1028.8 M1022.6,265.4 V281" stroke-width="1"/><path d="M1024.3,268 V279" stroke-width="1"/><path d="M1026.8,268 V278" stroke-width="1.9"/><path d="M1023.6,266.8 h4.4" stroke="#fff" stroke-width="0.9" stroke-dasharray="0.9 0.8"/><path d="M1023.4,279.4 l1.4,2.4 l1.4,-2.4" stroke-width="0.9"/>
<path d="M1022.6,290 V350" stroke-width="1.1"/><path d="M1027,287.6 V350" stroke-width="2"/>
<path d="M1017.2,282.2 H1035 M1017.2,282.2 C1015.8,288 1016.4,296 1018,300.6 H1022.4 M1017.6,288.4 C1019,290 1021,290.4 1022.6,290.4 M1028.6,291.5 H1035" stroke-width="1"/><path d="M1031.6,284.8 h3 M1029.6,290 h1.4 M1032.4,290 h1.4" stroke-width="1.4"/><path d="M1024.3,292 V295.4" stroke-width="0.9"/><path d="M1021,291 V299" stroke-width="1.4"/>
<path d="M1025.2,299.7 H1031" stroke-width="1.6" stroke-linecap="butt"/><path d="M1028,327.6 H1034 M1021,332.6 H1035 M1023,336 H1035 M1019,341 H1035" stroke-width="0.9"/>
<path d="M1016.8,313.4 C1018.6,312.4 1021.6,313.6 1021.8,317 L1021.6,325 C1020.6,328 1016.8,328 1015.6,325 Z" fill="#0c0c0c" stroke="none"/><path d="M1018,316 v8 M1019.6,317 v6" stroke="#999" stroke-width="0.6"/><path d="M1019.4,327 V350" stroke-width="2"/>
<path d="M1029.6,333.6 h4.6 v4.6 h-4.6 z" stroke-width="0.8"/>
<rect x="1040.4" y="322.2" width="5.2" height="51.4" fill="#fff" stroke-width="1.1"/><rect x="1040.4" y="339.8" width="5.2" height="9" fill="#0c0c0c" stroke="none"/><rect x="1042" y="341.4" width="1.6" height="5.4" fill="#999" stroke="none"/><path d="M1038.6,343 H1040.4 M1038.6,330 H1040.4" stroke-width="1"/>
<path d="M1041.2,373.6 V376 C1041.2,378.6 1043,379.6 1046,379.6 H1050.4 M1044.6,373.6 V375.4 C1044.6,376.8 1045.6,377.4 1047,377.4 H1050.4" stroke-width="1"/><path d="M1077.8,378.7 L1096,379.3 L1077.8,380.3 Z" fill="#0c0c0c" stroke-width="0.5"/>
<path d="M924.9,344.1 C935.9,344.1 945.9,351.5 947.9,364.5 V371.5" stroke-width="1.1" fill="none"/><path d="M922.9,346.5 C934.9,346.1 943.5,352.9 945.3,364.1 H947.9" stroke-width="0.9" fill="none"/><circle cx="926.9" cy="365.5" r="16.3" fill="#fff" stroke-width="1.4"/><circle cx="926.9" cy="365.5" r="14.8" stroke="#666" stroke-width="0.5"/><circle cx="926.9" cy="365.5" r="11" stroke="#444" stroke-width="0.5"/><circle cx="926.9" cy="365.5" r="9.6" fill="url(#hub)" stroke-width="0.8"/><circle cx="926.9" cy="365.5" r="2" fill="#111" stroke="#888" stroke-width="0.5"/>
<path d="M997.6,369.2 C997.6,353.2 1006.6,344.2 1018.6,344.2 C1029.6,344.2 1037.6,351.2 1039.2,361.2" stroke-width="1.1" fill="none"/><path d="M1000.0,368.2 C1000.0,355.2 1007.6,346.59999999999997 1018.6,346.59999999999997 C1028.6,346.59999999999997 1036.0,352.59999999999997 1037.2,361.8" stroke-width="0.9" fill="none"/><circle cx="1018.6" cy="365.2" r="16.3" fill="#fff" stroke-width="1.4"/><circle cx="1018.6" cy="365.2" r="14.8" stroke="#666" stroke-width="0.5"/><circle cx="1018.6" cy="365.2" r="11" stroke="#444" stroke-width="0.5"/><circle cx="1018.6" cy="365.2" r="9.6" fill="url(#hub)" stroke-width="0.8"/><circle cx="1018.6" cy="365.2" r="2" fill="#111" stroke="#888" stroke-width="0.5"/>
</g>
<circle cx="933.3" cy="300.9" r="37" stroke="#000" stroke-width="6.9"/><path d="M907.4,276.4 L960.6,326.6" stroke="#000" stroke-width="7"/>
<rect x="893.3" y="381.7" width="3.2" height="20.900000000000034" fill="#fff" stroke="#333" stroke-width="0.6"/><rect x="874.4" y="368.4" width="40.80000000000007" height="13.800000000000011" fill="#fff" stroke="#111" stroke-width="0.9"/>
<rect x="966.6999999999999" y="387.5" width="3.2" height="20.30000000000001" fill="#fff" stroke="#333" stroke-width="0.6"/><rect x="955.4" y="374.6" width="26.0" height="13.399999999999977" fill="#fff" stroke="#111" stroke-width="0.9"/>
<rect x="1062.4" y="386.5" width="3.2" height="20.899999999999977" fill="#fff" stroke="#333" stroke-width="0.6"/><rect x="1050.5" y="373.4" width="27.40000000000009" height="13.600000000000023" fill="#fff" stroke="#111" stroke-width="0.9"/>
<rect x="917.4" y="422.9" width="3.2" height="20.30000000000001" fill="#fff" stroke="#333" stroke-width="0.6"/><rect x="906.4" y="409.6" width="26.200000000000045" height="13.799999999999955" fill="#fff" stroke="#111" stroke-width="0.9"/>
<rect x="998.3" y="428.7" width="3.2" height="20.30000000000001" fill="#fff" stroke="#333" stroke-width="0.6"/><rect x="982.6" y="415.8" width="35.60000000000002" height="13.399999999999977" fill="#fff" stroke="#111" stroke-width="0.9"/>
<rect x="1074.2" y="465" width="2" height="4" fill="#fff"/><rect x="1050.5" y="448.7" width="47.6" height="17.2" fill="#fff"/><rect x="1057" y="468.1" width="40.2" height="7.6" fill="#fff"/>
<path d="M856.5,250.5 H1099.5 V477.5 H856.5 Z" stroke="#111" stroke-width="1.1"/>
</svg>
<div class="t" style="left:888.80px;top:370.60px;font-size:8.5px;color:#231f20;transform:scaleX(0.8539);-webkit-text-stroke:0.15px #231f20;">ICE</div>
<div class="t" style="left:962.10px;top:376.40px;font-size:8.5px;color:#231f20;transform:scaleX(0.8466);-webkit-text-stroke:0.15px #231f20;">OIL</div>
<div class="t" style="left:1053.80px;top:374.80px;font-size:8.5px;color:#231f20;transform:scaleX(0.8470);-webkit-text-stroke:0.15px #231f20;">SAND</div>
<div class="t" style="left:911.80px;top:411.60px;font-size:8.5px;color:#231f20;transform:scaleX(0.8318);-webkit-text-stroke:0.15px #231f20;">MUD</div>
<div class="t" style="left:986.20px;top:417.90px;font-size:8.5px;color:#231f20;transform:scaleX(0.8389);-webkit-text-stroke:0.15px #231f20;">GRAVEL</div>
<div class="t" style="left:1063.60px;top:448.60px;font-size:8.5px;color:#231f20;transform:scaleX(0.8589);-webkit-text-stroke:0.15px #231f20;">WEAK</div>
<div class="t" style="left:1061.00px;top:455.70px;font-size:8.5px;color:#231f20;transform:scaleX(0.8412);-webkit-text-stroke:0.15px #231f20;">FLOORS</div>
<div class="t" style="left:1058.10px;top:467.81px;font-size:7.2px;color:#231f20;transform:scaleX(0.8699);-webkit-text-stroke:0.15px #231f20;">70D9V1SH16</div>
<svg class="abs" style="left:850px;top:504px" width="256" height="176" viewBox="850 504 256 176" fill="none" stroke-linecap="round" stroke-linejoin="round">
<defs><clipPath id="f2c"><rect x="858" y="512" width="240" height="158"/></clipPath></defs>
<rect x="856.5" y="510.4" width="243" height="162" fill="#fff"/>
<g clip-path="url(#f2c)">
<g transform="translate(855 508) scale(0.20292)" stroke="#1a1a1a" stroke-width="4.6">
<path d="M20,78 L100,28"/>
<path d="M95,135 L265,28"/>
<path d="M20,115 L72,140"/>
<path d="M20,205 L75,242 Q88,244 93,230 L84,168 Q86,140 122,127 L345,90"/>
<path d="M93,230 Q112,214 130,186 L222,131"/>
<path d="M222,131 V158 L136,205"/>
<path d="M365,25 Q338,100 335,212 Q345,262 400,300 Q462,332 470,388"/>
<path d="M505,25 Q528,120 515,400"/>
<path d="M530,25 Q552,120 533,400"/>
<path d="M20,515 Q120,425 232,412 Q292,422 332,410"/>
<path d="M216,412 Q230,300 335,215"/>
<path d="M100,565 Q300,605 520,502"/>
<path d="M20,665 L32,671"/>
<path d="M70,695 Q175,702 265,795"/>
<path d="M95,730 V800"/>
<path d="M158,735 V800"/>
<path d="M20,785 L42,797"/>
<path d="M570,598 Q520,685 500,800"/>
<path d="M136,200 L220,150" stroke-width="16" stroke="#444" stroke-dasharray="3 3" stroke-linecap="butt"/>
</g>
<g transform="translate(975 508) scale(0.20292)" stroke="#1a1a1a" stroke-width="4.6">
<path d="M145,28 Q200,56 255,28"/>
<path d="M425,28 Q392,150 435,282"/>
<path d="M345,70 Q333,180 358,298"/>
<path d="M215,402 Q235,205 290,136 Q306,128 298,152 Q255,250 240,392"/>
<path d="M105,490 Q130,462 215,410 L445,280 Q466,276 468,294"/>
<path d="M468,368 L185,530"/>
<path d="M468,478 L330,530 Q262,560 215,612"/>
<path d="M105,490 Q94,530 100,572 Q140,622 186,632 Q180,570 196,540 L185,530"/>
<path d="M120,512 L170,540"/>
<path d="M215,612 L232,580 L322,530 L326,556 L240,604"/>
<path d="M15,560 L190,682 L226,642 L186,632"/>
<path d="M100,572 L160,612"/>
<path d="M230,800 Q250,652 340,560 Q380,572 378,622 Q370,742 350,772 L270,800"/>
<path d="M262,800 Q280,680 350,600"/>
<path d="M75,800 Q90,700 140,660"/>
<path d="M150,800 Q150,722 176,682"/>
<path d="M100,800 Q108,760 125,745"/>
<path d="M170,722 L225,746 L215,770 L165,750 Z"/>
<path d="M180,760 L220,778 L205,800"/>
<path d="M325,780 L355,770 L350,748"/>
<path d="M232,596 L322,545" stroke-width="14" stroke="#444" stroke-dasharray="3 3" stroke-linecap="butt"/>
<ellipse cx="362" cy="608" rx="11" ry="14" transform="rotate(25 362 608)"/><ellipse cx="338" cy="748" rx="11" ry="16" transform="rotate(15 338 748)"/><ellipse cx="272" cy="782" rx="10" ry="14" transform="rotate(15 272 782)"/>
<path d="M195,760 L215,772 L200,800 L185,795 Z" fill="#333" stroke-width="3"/>
</g>
<g transform="translate(905 560) scale(0.10870)" stroke="#1a1a1a" stroke-width="8.6">
<path d="M110,125 L50,235 L75,248 L135,140 Z" fill="#fff"/>
<path d="M110,125 L150,150 L300,262"/>
<path d="M75,248 L160,290 L205,325"/>
<path d="M130,276 L165,300"/>
<path d="M265,80 L205,165"/>
<path d="M205,325 L300,262 L445,312 L345,354 Z" fill="#fff"/>
<path d="M205,325 L196,362 L350,436 L345,354"/>
<path d="M445,312 L450,366 L350,436"/>
<path d="M300,262 Q372,244 440,262 L822,472"/>
<path d="M604,536 Q596,548 612,560 L650,590 Q668,600 688,586 L770,520 L700,478 Z" fill="#fff"/>
<path d="M598,548 Q600,566 620,578 L648,598 Q668,606 690,592"/>
<path d="M770,540 L830,575"/>
<path d="M556,498 Q550,486 562,478 L598,456 Q610,450 622,456 L660,476 L606,530 Z" fill="#fff"/>
<path d="M342,346 L420,312 L440,326 L366,364 Z" fill="#2a2a2a" stroke-width="5"/><path d="M352,348 L418,320" stroke="#ddd" stroke-width="6"/><path d="M366,392 L440,360 L441,382 L370,416 Z" fill="#333" stroke-width="4"/><path d="M378,398 v12 M392,392 v12 M406,386 v12 M420,380 v12" stroke="#ccc" stroke-width="4"/>
<path d="M572,458 L492,408" stroke="#000" stroke-width="36" stroke-linecap="butt"/><path d="M440,384 L500,376 L470,430 Z" fill="#000" stroke="#000" stroke-width="4"/>
<path d="M588,482 L626,470 L634,494 L598,508 Z" fill="#2a2a2a" stroke-width="4"/><path d="M602,484 v14 M616,480 v14" stroke="#ddd" stroke-width="5"/>
<path d="M644,524 L708,502 Q722,500 720,514 L656,540 Q640,542 644,524 Z" fill="#fff" stroke-width="7"/>
</g>
</g>
<path d="M856.5,510.4 H1099.5 V672.4 H856.5 Z" stroke="#1c1a1b" stroke-width="1.05"/>
</svg>
<div class="t" style="left:1060.20px;top:662.54px;font-size:6.8px;color:#231f20;transform:scaleX(0.9431);">22D9TOM10</div>
</body>
</html>
